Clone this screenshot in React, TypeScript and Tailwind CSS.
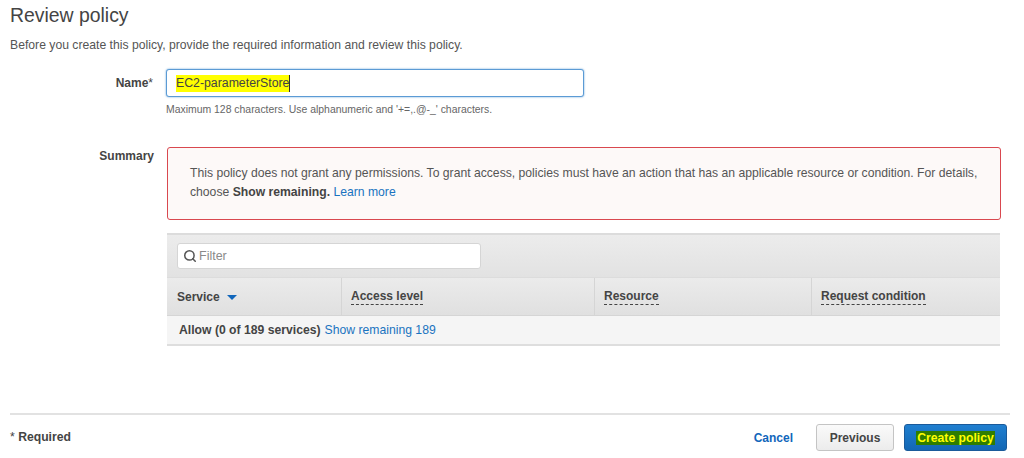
import { Search } from "lucide-react";

const F = "font-['Liberation_Sans',Arial,sans-serif]";

function Th({ label, w, dashed }: { label: string; w: string; dashed?: boolean }) {
  return (
    <div className={`${w} flex items-center border-l border-[#d5d5d5] pl-[9px] first:border-l-0`}>
      <span className={`text-[12px] font-bold text-[#444] leading-[14px] ${dashed ? "border-b border-dashed border-[#444] pb-[1px] mt-[1px]" : ""}`}>{label}</span>
    </div>
  );
}

export default function App() {
  return (
    <div className={`${F} w-[1024px] h-[458px] overflow-hidden bg-white text-[#444] flex flex-col pl-[10px]`}>
      <h1 className="text-[19.4px] leading-[20px] mt-[5px] font-normal text-[#444]">Review policy</h1>
      <p className="text-[12.2px] leading-[14px] mt-[13px] text-[#555]">Before you create this policy, provide the required information and review this policy.</p>

      <div className="flex mt-[17px]">
        <div className="w-[144px] pr-[1px] pt-[7px] text-right text-[12px] font-bold leading-[14px] text-[#444]">Name<span className="font-normal">*</span></div>
        <div className="ml-[12px]">
          <div className="w-[418px] h-[28px] flex items-center rounded-[3px] border border-[#5b9bd5] shadow-[0_0_2px_#5b9bd5] pl-[9px] bg-white">
            <span className="bg-[#ffff00] text-[12.3px] leading-[17px] text-[#444] border-r border-[#333]">EC2-parameterStore</span>
          </div>
          <p className="text-[10.43px] leading-[12px] mt-[7px] text-[#666]">Maximum 128 characters. Use alphanumeric and '+=,.@-_' characters.</p>
        </div>
      </div>

      <div className="flex mt-[31px]">
        <div className="w-[144px] pt-[2px] text-right text-[12px] font-bold leading-[14px] text-[#444]">Summary</div>
        <div className="ml-[13px] w-[834px]">
          <div className="h-[73px] rounded-[3px] border border-[#d9484f] bg-[#fdf9f8] pl-[22px] pt-[16px] text-[12.18px] leading-[18.5px] text-[#555]">
            <div>This policy does not grant any permissions. To grant access, policies must have an action that has an applicable resource or condition. For details,</div>
            <div>choose <b className="text-[#444]">Show remaining.</b> <span className="text-[#1a73c0]">Learn more</span></div>
          </div>

          <div className="mt-[13px] w-[833px]">
            <div className="h-[45px] border-t-2 border-b border-[#dcdcdc] bg-gradient-to-b from-[#ececec] to-[#e2e2e2] pl-[10px] pt-[8px]">
              <div className="w-[304px] h-[26px] flex items-center rounded-[3px] border border-[#d5d5d5] bg-white pl-[5px]">
                <Search size={14} strokeWidth={2.6} className="text-[#555]" />
                <span className="ml-[2px] text-[12.5px] text-[#8a8a8a]">Filter</span>
              </div>
            </div>
            <div className="h-[38px] flex border-b border-[#d5d5d5] bg-gradient-to-b from-[#ebebeb] to-[#e0e0e0]">
              <div className="w-[174px] flex items-center pl-[10px]">
                <span className="text-[12px] font-bold text-[#444]">Service</span>
                <svg width="10" height="5" viewBox="0 0 10 5" className="ml-[7px] mt-[1px]"><path d="M0 0h10L5 5z" fill="#1166bb" /></svg>
              </div>
              <Th label="Access level" w="w-[253px]" dashed />
              <Th label="Resource" w="w-[217px]" dashed />
              <Th label="Request condition" w="flex-1" dashed />
            </div>
            <div className="h-[30px] flex items-center border-b-2 border-[#dedede] bg-[#f5f5f5] pl-[12px] text-[12.2px]">
              <b className="text-[#444]">Allow (0 of 189 services)</b>
              <span className="ml-[4px] text-[#1a73c0]">Show remaining 189</span>
            </div>
          </div>
        </div>
      </div>

      <div className="w-[1000px] mt-[67px] border-t-2 border-[#e2e2e2] flex items-center justify-between pt-[9px]">
        <span className="text-[12.2px] font-bold text-[#444]"><span className="font-normal">*</span> Required</span>
        <div className="flex items-center mr-[3px]">
          <span className="text-[12px] font-bold text-[#1166bb]">Cancel</span>
          <div className="ml-[23px] w-[78px] h-[27px] flex items-center justify-center rounded-[3px] border border-[#c4c4c4] bg-gradient-to-b from-[#fafafa] to-[#ececec] text-[12px] font-bold text-[#444]">Previous</div>
          <div className="ml-[10px] w-[103px] h-[27px] flex items-center justify-center rounded-[3px] border border-[#1a5a9a] bg-gradient-to-b from-[#1f7fd0] to-[#1367b4] text-[12.2px] font-bold">
            <span className="bg-[#2f7d00] text-[#ffff00] leading-[14px] px-[1px]">Create policy</span>
          </div>
        </div>
      </div>
    </div>
  );
}
